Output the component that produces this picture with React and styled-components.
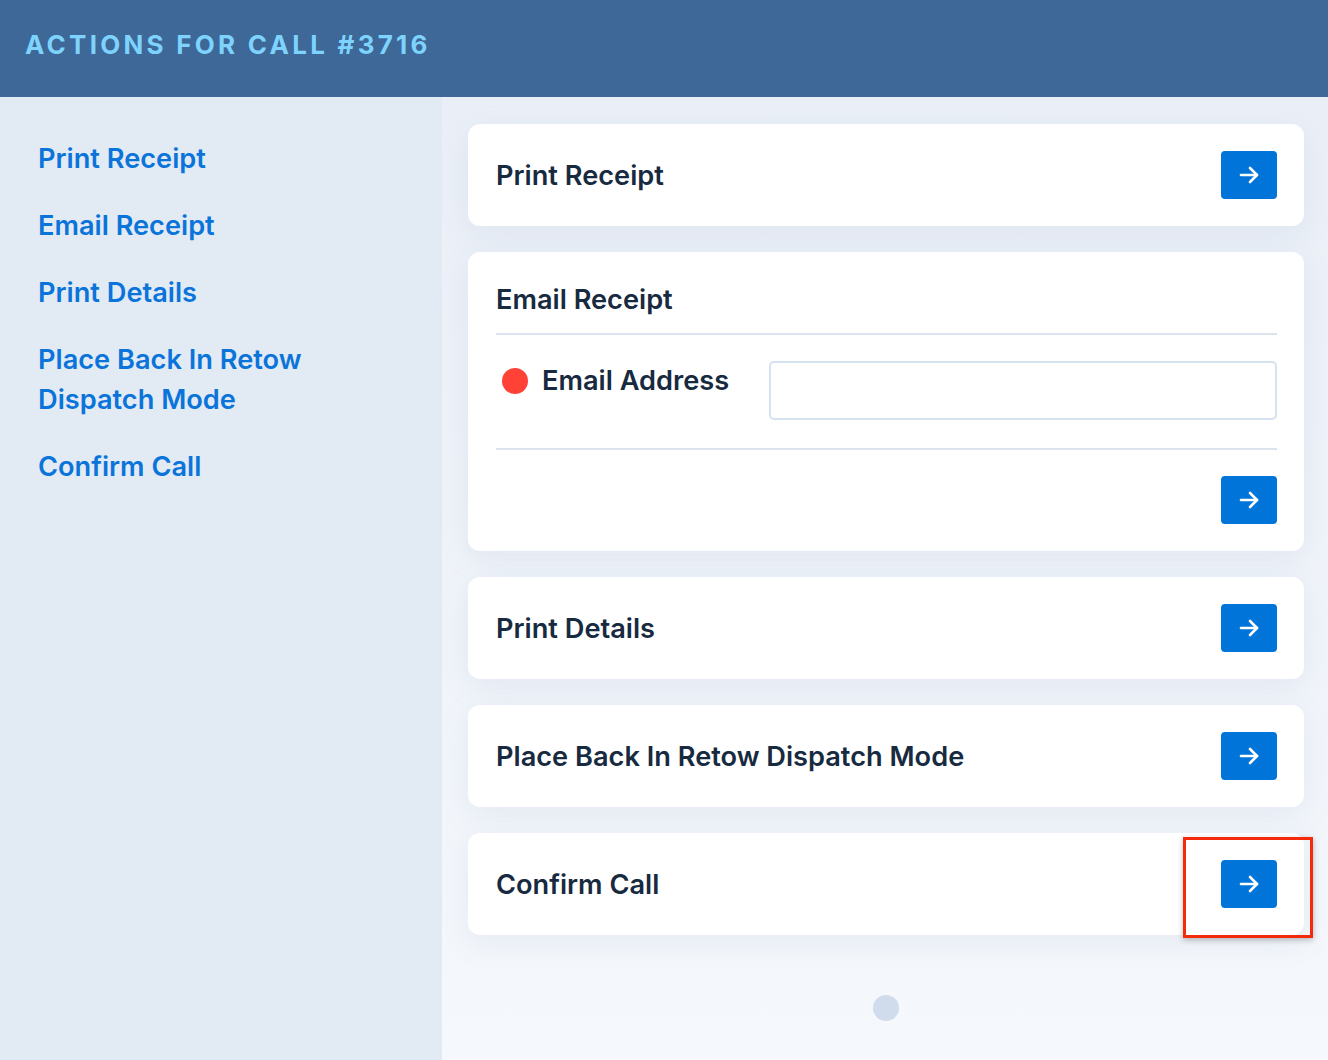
import React from "react";
import styled, { createGlobalStyle } from "styled-components";

const Global = createGlobalStyle`
  html, body { margin: 0; padding: 0; }
  body { font-family: Inter, "Noto Sans", sans-serif; background: #f1f5fa; }
  * { box-sizing: border-box; }
`;

const Page = styled.div`
  display: flex;
  flex-direction: column;
  width: 1328px;
  height: 1060px;
  overflow: hidden;
`;

const Header = styled.header`
  height: 97px;
  flex: none;
  background: #3d6898;
  display: flex;
  align-items: center;
  padding: 0 25px 8px;
`;

const Title = styled.h1`
  margin: 0;
  font-size: 26px;
  font-weight: 700;
  letter-spacing: 3.25px;
  color: #7dd3fc;
  text-transform: uppercase;
`;

const Body = styled.div`
  flex: 1;
  display: flex;
  min-height: 0;
`;

const Sidebar = styled.nav`
  width: 442px;
  flex: none;
  background: #e2eaf4;
  padding: 42px 38px;
  display: flex;
  flex-direction: column;
  gap: 27px;
`;

const NavLink = styled.a`
  font-size: 27.2px;
  font-weight: 600;
  line-height: 40px;
  color: #0a74da;
  text-decoration: none;
  cursor: pointer;
`;

const Main = styled.main`
  flex: 1;
  background: linear-gradient(#eaeff7, #f5f8fc);
  padding: 27px 24px 27px 26px;
  display: flex;
  flex-direction: column;
  gap: 26px;
`;

const Card = styled.section`
  background: #ffffff;
  border-radius: 12px;
  padding: 27px 27px 27px 28px;
  box-shadow: 0 8px 30px rgba(120, 145, 185, 0.12);
  display: flex;
  flex-direction: column;
`;

const Row = styled.div`
  display: flex;
  align-items: center;
  justify-content: space-between;
`;

const CardTitle = styled.h2`
  margin: 0;
  font-size: 27.2px;
  font-weight: 600;
  color: #172a40;
  line-height: 42px;
  padding-top: 2px;
`;

const CardHead = styled.div`
  margin-top: -2px;
  padding-bottom: 12px;
  border-bottom: 2px solid #dbe4ee;
`;

const FieldRow = styled.div`
  display: flex;
  align-items: flex-start;
  padding: 26px 0 28px;
  border-bottom: 2px solid #dbe4ee;
`;

const Label = styled.label`
  width: 273px;
  flex: none;
  display: flex;
  align-items: center;
  gap: 14px;
  padding-left: 6px;
  font-size: 27.2px;
  font-weight: 600;
  color: #172a40;
  line-height: 40px;
`;

const Required = styled.span`
  width: 26px;
  height: 26px;
  border-radius: 50%;
  background: #ff4136;
  flex: none;
`;

const Input = styled.input`
  flex: 1;
  height: 59px;
  border: 2px solid #d6e2ef;
  border-radius: 5px;
  font-size: 20px;
  padding: 0 14px;
  outline: none;
`;

const Footer = styled.div`
  display: flex;
  justify-content: flex-end;
  padding-top: 26px;
`;

const GoWrap = styled.div`
  position: relative;
`;

const GoButton = styled.button`
  width: 56px;
  height: 48px;
  border: none;
  border-radius: 4px;
  background: #0074d9;
  display: flex;
  align-items: center;
  justify-content: center;
  cursor: pointer;
  padding: 0;
`;

const Highlight = styled.div`
  position: absolute;
  left: -38px;
  top: -23px;
  width: 130px;
  height: 101px;
  border: 3px solid #f52a0a;
  box-shadow: 0 2px 6px rgba(0, 0, 0, 0.25);
  pointer-events: none;
`;

const Spinner = styled.div`
  align-self: center;
  margin-top: 34px;
  width: 26px;
  height: 26px;
  border-radius: 50%;
  background: #d0dcec;
`;

const Arrow = () => (
  <svg width="20" height="18" viewBox="0 0 20 18" fill="none" stroke="#fff" strokeWidth="2.6" strokeLinecap="round" strokeLinejoin="round">
    <path d="M2 9h16" />
    <path d="M11 2l7 7-7 7" />
  </svg>
);

const Go = ({ highlight }) => (
  <GoWrap>
    <GoButton aria-label="Go">
      <Arrow />
    </GoButton>
    {highlight && <Highlight />}
  </GoWrap>
);

const links = [
  "Print Receipt",
  "Email Receipt",
  "Print Details",
  "Place Back In Retow Dispatch Mode",
  "Confirm Call",
];

export default function App() {
  return (
    <Page>
      <Global />
      <Header>
        <Title>Actions for Call #3716</Title>
      </Header>
      <Body>
        <Sidebar>
          {links.map((l) => (
            <NavLink key={l}>{l}</NavLink>
          ))}
        </Sidebar>
        <Main>
          <Card>
            <Row>
              <CardTitle>Print Receipt</CardTitle>
              <Go />
            </Row>
          </Card>
          <Card>
            <CardHead>
              <CardTitle>Email Receipt</CardTitle>
            </CardHead>
            <FieldRow>
              <Label>
                <Required />
                Email Address
              </Label>
              <Input type="email" />
            </FieldRow>
            <Footer>
              <Go />
            </Footer>
          </Card>
          <Card>
            <Row>
              <CardTitle>Print Details</CardTitle>
              <Go />
            </Row>
          </Card>
          <Card>
            <Row>
              <CardTitle>Place Back In Retow Dispatch Mode</CardTitle>
              <Go />
            </Row>
          </Card>
          <Card>
            <Row>
              <CardTitle>Confirm Call</CardTitle>
              <Go highlight />
            </Row>
          </Card>
          <Spinner />
        </Main>
      </Body>
    </Page>
  );
}
